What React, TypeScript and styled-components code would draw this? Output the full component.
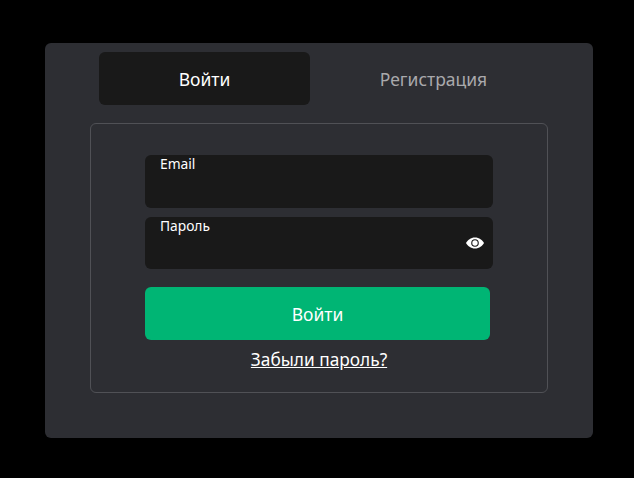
import { FC } from "react";
import styled, { createGlobalStyle } from "styled-components";

const GlobalStyle = createGlobalStyle`
  html, body {
    margin: 0;
    padding: 0;
    height: 100%;
    background: #000;
    overflow: hidden;
  }
  * {
    box-sizing: border-box;
  }
`;

const Page = styled.div`
  padding: 43px 0 0 45px;
  font-family: "Noto Sans", "Liberation Sans", sans-serif;
`;

const Card = styled.div`
  width: 548px;
  height: 395px;
  padding: 9px 45px 0;
  background: #2d2e33;
  border-radius: 6px;
`;

const Tabs = styled.div`
  display: flex;
  justify-content: center;
  gap: 18px;
  margin-bottom: 18px;
`;

const Tab = styled.div<{ $active?: boolean }>`
  width: 211px;
  height: 53px;
  display: flex;
  align-items: center;
  justify-content: center;
  border-radius: 6px;
  font-size: 17.5px;
  color: ${(p) => (p.$active ? "#ffffff" : "#a9a9ac")};
  background: ${(p) => (p.$active ? "#191919" : "transparent")};
`;

const FormBox = styled.div`
  width: 458px;
  height: 270px;
  padding: 31px 54px 0;
  border: 1px solid #505156;
  border-radius: 6px;
`;

const Field = styled.div<{ $height: number }>`
  position: relative;
  width: 348px;
  height: ${(p) => p.$height}px;
  margin-bottom: 9px;
  padding: 0 15px;
  background: #191919;
  border-radius: 6px;
`;

const FieldLabel = styled.div`
  font-size: 13.8px;
  line-height: 18px;
  color: #ffffff;
`;

const EyeButton = styled.span`
  position: absolute;
  right: 8px;
  top: 19px;
  display: flex;
`;

const SubmitButton = styled.div`
  width: 345px;
  height: 53px;
  margin-top: 18px;
  display: flex;
  align-items: center;
  justify-content: center;
  background: #00b574;
  border-radius: 6px;
  font-size: 17.5px;
  color: #ffffff;
`;

const ForgotLink = styled.a`
  display: block;
  width: 348px;
  margin-top: 8px;
  text-align: center;
  font-size: 17.3px;
  line-height: 23px;
  color: #ffffff;
  text-decoration: underline;
`;

const EyeIcon: FC = () => (
  <svg width="20" height="14" viewBox="0 0 20 14">
    <path
      d="M10 1.5C5.800 1.500 2.500 4.200 1 7c1.500 2.800 4.800 5.500 9 5.500s7.500-2.700 9-5.500c-1.500-2.800-4.800-5.500-9-5.500z"
      fill="#ffffff"
    />
    <circle cx="10" cy="7" r="3.800" fill="#191919" />
    <circle cx="10" cy="7" r="2.700" fill="#ffffff" />
  </svg>
);

const App: FC = () => {
  return (
    <Page>
      <GlobalStyle />
      <Card>
        <Tabs>
          <Tab $active>Войти</Tab>
          <Tab>Регистрация</Tab>
        </Tabs>
        <FormBox>
          <Field $height={53}>
            <FieldLabel>Email</FieldLabel>
          </Field>
          <Field $height={52}>
            <FieldLabel>Пароль</FieldLabel>
            <EyeButton>
              <EyeIcon />
            </EyeButton>
          </Field>
          <SubmitButton>Войти</SubmitButton>
          <ForgotLink>Забыли пароль?</ForgotLink>
        </FormBox>
      </Card>
    </Page>
  );
};

export default App;
